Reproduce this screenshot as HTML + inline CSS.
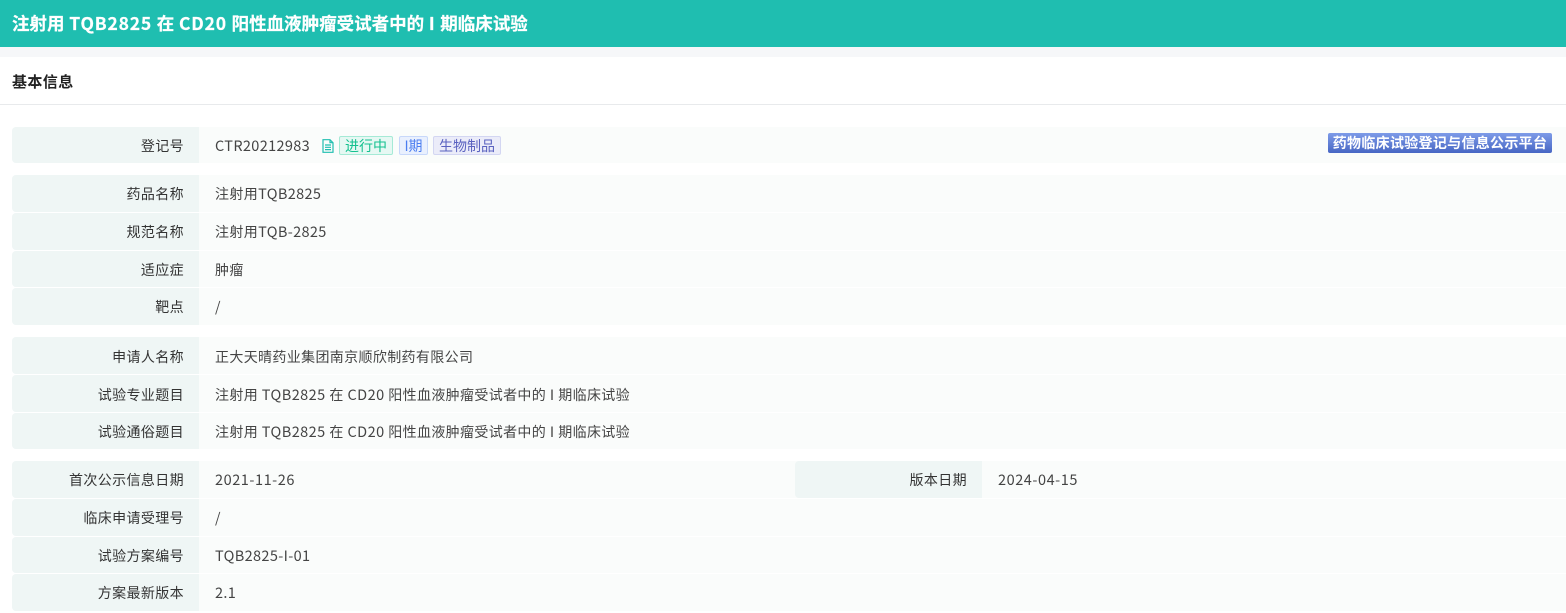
<!DOCTYPE html>
<html lang="zh-CN"><head><meta charset="utf-8"><title>注射用 TQB2825</title>
<style>
html,body{margin:0;padding:0;background:#fff}
body{width:1566px;height:612px;overflow:hidden;position:relative;font-family:"Noto Sans CJK SC","Liberation Sans",sans-serif;font-size:14px;color:#444}
i{font-style:normal;font-size:14.5px;letter-spacing:.35px}
.long i{letter-spacing:.45px}
.hd{position:absolute;left:0;top:0;width:1566px;height:47px;background:#1fbeb0;color:#fff;font-size:17.5px;font-weight:700;line-height:47px;padding-left:12px;box-sizing:border-box;white-space:nowrap;-webkit-text-stroke:.2px #fff}
.hd i{font-size:17.5px;letter-spacing:.8px}
.gap{position:absolute;left:0;top:47px;width:1566px;height:10px;background:#f6f7f9}
.sec{position:absolute;left:12px;top:72px;font-size:15px;font-weight:700;color:#222;line-height:20px;letter-spacing:.4px}
.ln{position:absolute;left:0;top:104px;width:1566px;height:1px;background:#e8eaec}
.r{position:absolute;left:12px;width:1554px;height:36.8px;background:#fafcfb;border-radius:4px 0 0 4px}
.l{position:absolute;top:0;left:0;width:187px;height:100%;background:#eff6f5;border-radius:4px 0 0 4px;text-align:right;box-sizing:border-box;padding-right:15px;line-height:38.5px;color:#333;white-space:nowrap;letter-spacing:.38px}
.v{position:absolute;left:203px;top:0;line-height:38.5px;color:#444;white-space:nowrap;letter-spacing:.35px}
.dn .l,.dn .v{line-height:40.5px}
.l2{left:783px}.v2{left:986px}
.dt i{letter-spacing:.55px}
.t{position:absolute;top:9px;height:19px;line-height:18px;box-sizing:border-box;border:1px solid;border-radius:2px;text-align:center;white-space:nowrap}
.badge{position:absolute;left:1316px;top:6px;width:224px;height:20px;border-radius:2px;background:linear-gradient(#7d9be8,#4766c4);color:#fff;font-size:14px;font-weight:700;line-height:21px;text-align:center;white-space:nowrap;letter-spacing:.3px}
svg{position:absolute}
</style></head><body>
<div class="hd">注射用<i> TQB2825 </i>在<i> CD20 </i>阳性血液肿瘤受试者中的<i> I </i>期临床试验</div>
<div class="gap"></div>
<div class="sec">基本信息</div>
<div class="ln"></div>

<div class="r" style="top:127px;height:36px"><div class="l">登记号</div><div class="v"><i>CTR20212983</i></div>
<svg style="left:310px;top:11.5px" width="12" height="14" viewBox="0 0 12 14" fill="none" stroke="#1fbeb0" stroke-width="1.2"><path d="M1 .7H8L11 3.7V13.3H1ZM8 .7V3.7H11M3 6H9M3 8.3H9M3 10.6H9"/></svg>
<span class="t" style="left:327px;width:54px;color:#14c18f;background:#e6f8f3;border-color:#a5ead6">进行中</span>
<span class="t" style="left:387px;width:29px;color:#4a7df0;background:#e9f0fe;border-color:#c8d8fa">I期</span>
<span class="t" style="left:421px;width:68px;color:#5a62c0;background:#ebecf9;border-color:#d3d6f2">生物制品</span>
<div class="badge">药物临床试验登记与信息公示平台</div></div>

<div class="r" style="top:175px"><div class="l">药品名称</div><div class="v">注射用<i>TQB2825</i></div></div>
<div class="r" style="top:212.8px"><div class="l">规范名称</div><div class="v">注射用<i>TQB-2825</i></div></div>
<div class="r" style="top:250.6px"><div class="l">适应症</div><div class="v">肿瘤</div></div>
<div class="r" style="top:288.4px"><div class="l">靶点</div><div class="v">/</div></div>

<div class="r dn" style="top:337px"><div class="l">申请人名称</div><div class="v">正大天晴药业集团南京顺欣制药有限公司</div></div>
<div class="r dn long" style="top:374.8px"><div class="l">试验专业题目</div><div class="v">注射用<i> TQB2825 </i>在<i> CD20 </i>阳性血液肿瘤受试者中的<i> I </i>期临床试验</div></div>
<div class="r long" style="top:412.6px"><div class="l">试验通俗题目</div><div class="v">注射用<i> TQB2825 </i>在<i> CD20 </i>阳性血液肿瘤受试者中的<i> I </i>期临床试验</div></div>

<div class="r dt" style="top:461px"><div class="l">首次公示信息日期</div><div class="v"><i>2021-11-26</i></div><div class="l l2">版本日期</div><div class="v v2"><i>2024-04-15</i></div></div>
<div class="r" style="top:498.8px"><div class="l">临床申请受理号</div><div class="v">/</div></div>
<div class="r" style="top:536.6px"><div class="l">试验方案编号</div><div class="v"><i>TQB2825-I-01</i></div></div>
<div class="r" style="top:574.4px"><div class="l">方案最新版本</div><div class="v"><i>2.1</i></div></div>
</body></html>
